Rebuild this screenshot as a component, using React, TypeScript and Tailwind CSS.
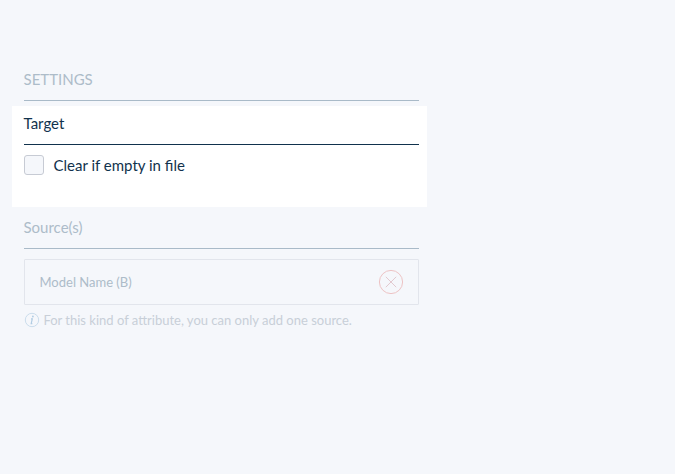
import React from "react";

function SectionTitle({ children, className }: { children: React.ReactNode; className: string }) {
  return (
    <h2 className={`flex border-b text-[15px] ${className}`}>
      <span className="-ml-[0.5px]">{children}</span>
    </h2>
  );
}

function RemoveIcon() {
  return (
    <svg width="26" height="26" viewBox="0 0 26 26" fill="none">
      <circle cx="13" cy="13" r="11.6" stroke="#edc3c4" />
      <path d="M7.8 7.8 18.2 18.2M18.2 7.8 7.8 18.2" stroke="#e2c9cf" />
    </svg>
  );
}

function InfoIcon() {
  return (
    <svg width="16" height="16" viewBox="0 0 16 16" fill="none" className="shrink-0">
      <circle cx="8" cy="8" r="6.7" stroke="#c5d9ea" strokeWidth="0.9" />
      <circle cx="8.9" cy="4.5" r="0.9" fill="#b0cce3" />
      <path d="M7 6.9H8.3L7.2 11.7H8.3" stroke="#b0cce3" strokeWidth="1.2" />
    </svg>
  );
}

export default function App() {
  return (
    <main className="h-[474px] bg-[#f5f7fb] pt-16 font-['Lato',sans-serif]">
      <div className="w-[427px] pl-3">
        <div className="pr-2 pl-3">
          <SectionTitle className="h-[37px] items-start border-[#a9bac8] pt-[4px] leading-[22px] text-[#adbcc9]">
            SETTINGS
          </SectionTitle>
        </div>

        <section className="mt-[5px] h-[101px] bg-white pr-2 pl-3">
          <SectionTitle className="h-[39px] items-center border-[#11324d] pb-[3px] text-[#11324d]">
            Target
          </SectionTitle>
          <label className="mt-[10px] flex items-center gap-[9.5px] text-[15px] leading-5 text-[#11324d]">
            <span className="size-5 rounded-[3px] border border-[#c7cbd4] bg-[#f5f7fb]" />
            <span>Clear if empty in file</span>
          </label>
        </section>

        <section className="pr-2 pl-3">
          <SectionTitle className="h-[42px] items-center border-[#a9bac8] text-[#adbcc9]">Source(s)</SectionTitle>
          <div className="mt-[10px] flex h-[46px] items-center justify-between rounded-[1px] border border-[#e2e5ec] pr-[14px] pl-[14.5px] text-[13px] text-[#adbcc9]">
            <span className="pt-[2px]">Model Name (B)</span>
            <RemoveIcon />
          </div>
          <p className="mt-[7px] flex items-center gap-[3.4px] text-[13px] leading-4 text-[#c8cfd8]">
            <InfoIcon />
            <span>For this kind of attribute, you can only add one source.</span>
          </p>
        </section>
      </div>
    </main>
  );
}
